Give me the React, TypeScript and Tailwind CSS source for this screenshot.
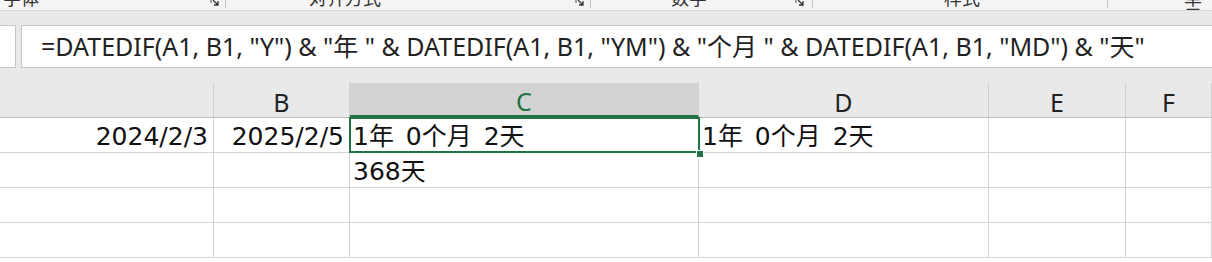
import React from "react";

const font = { fontFamily: '"Noto Sans", "Noto Sans CJK SC", sans-serif' };
const cellFont = { fontFamily: '"DejaVu Sans", "Noto Sans CJK SC", sans-serif' };

// column widths as seen in the sheet (A is cut off on the left)
const cols = [
  { key: "A", w: "w-[214px]" },
  { key: "B", w: "w-[136px]" },
  { key: "C", w: "w-[349px]" },
  { key: "D", w: "w-[290px]" },
  { key: "E", w: "w-[137px]" },
  { key: "F", w: "flex-1" },
];

const rows: string[][] = [
  ["2024/2/3", "2025/2/5", "1年 0个月 2天", "1年 0个月 2天", "", ""],
  ["", "", "368天", "", "", ""],
  ["", "", "", "", "", ""],
  ["", "", "", "", "", ""],
];

function Launcher() {
  return (
    <svg width="10" height="10" viewBox="0 0 10 10" className="mt-[-3px]">
      <path d="M1 1h5M1 1v5" stroke="#555" strokeWidth="1" fill="none" />
      <path d="M3 3l5 5M8 4v4H4" stroke="#333" strokeWidth="1.3" fill="none" />
    </svg>
  );
}

function Ribbon() {
  return (
    <div className="h-[11px] bg-[#f5f5f5] border-b border-[#d6d6d6] overflow-hidden flex text-[18px] text-[#333] leading-none">
      <div className="w-[226px] flex border-r border-[#c6c6c6] h-[8px]">
        <span className="ml-[3px] mt-[-11px]">字体</span>
        <div className="flex-1" />
        <span className="mr-[5px]"><Launcher /></span>
      </div>
      <div className="w-[365px] flex border-r border-[#c6c6c6] h-[8px]">
        <span className="ml-[83px] mt-[-11px]">对齐方式</span>
        <div className="flex-1" />
        <span className="mr-[5px]"><Launcher /></span>
      </div>
      <div className="w-[222px] flex border-r border-[#c6c6c6] h-[8px]">
        <span className="ml-[80px] mt-[-11px]">数字</span>
        <div className="flex-1" />
        <span className="mr-[7px]"><Launcher /></span>
      </div>
      <div className="w-[295px] flex border-r border-[#c6c6c6] h-[8px]">
        <span className="ml-[131px] mt-[-11px]">样式</span>
      </div>
      <div className="flex-1 flex">
        <span className="ml-[76px] mt-[-11px]">单元</span>
      </div>
    </div>
  );
}

function FormulaBar() {
  return (
    <div className="bg-[#e9e9e9] pt-[14px] pb-[15px] flex gap-[5px]">
      <div className="w-[16px] h-[43px] bg-white border border-l-0 border-[#c6c6c6]" />
      <div className="flex-1 h-[43px] bg-white border border-r-0 border-[#c6c6c6] flex items-center pl-[19px] text-[25px] text-[#222] whitespace-nowrap">
        =DATEDIF(A1, B1, "Y") &amp; "年 " &amp; DATEDIF(A1, B1, "YM") &amp; "个月 " &amp; DATEDIF(A1, B1, "MD") &amp; "天"
      </div>
    </div>
  );
}

export default function App() {
  return (
    <div className="w-[1212px] h-[262px] overflow-hidden bg-white" style={font}>
      <Ribbon />
      <FormulaBar />

      {/* column headers */}
      <div className="flex h-[35px] bg-[#e9e9e9] border-b border-[#bdbdbd]">
        {cols.map((c) => (
          <div
            key={c.key}
            className={`${c.w} shrink-0 flex items-center justify-center pt-[5px] text-[25px] border-r border-[#cfcfcf] ${
              c.key === "C" ? "bg-[#d3d3d3] text-[#217346] border-b-2 border-b-[#217346]" : "text-[#222]"
            }`}
          >
            {c.key === "A" ? "" : c.key}
          </div>
        ))}
      </div>

      {/* cells */}
      <div className="relative" style={cellFont}>
        {rows.map((r, ri) => (
          <div key={ri} className="flex h-[35px] border-b border-[#d4d4d4]">
            {cols.map((c, ci) => (
              <div
                key={c.key}
                className={`${c.w} shrink-0 flex items-center pt-[4px] text-[25px] text-[#111] whitespace-nowrap [word-spacing:4px] border-r border-[#d4d4d4] ${
                  ci < 2 ? "justify-end pr-[5px]" : "pl-[3px]"
                }`}
              >
                {r[ci]}
              </div>
            ))}
          </div>
        ))}
        {/* selected cell C1 */}
        <div className="absolute left-[349px] top-[-1px] w-[351px] h-[36px] border-2 border-[#217346] pointer-events-none" />
        <div className="absolute left-[696px] top-[32px] w-[6px] h-[6px] bg-[#217346] border border-white box-content" />
      </div>
    </div>
  );
}
